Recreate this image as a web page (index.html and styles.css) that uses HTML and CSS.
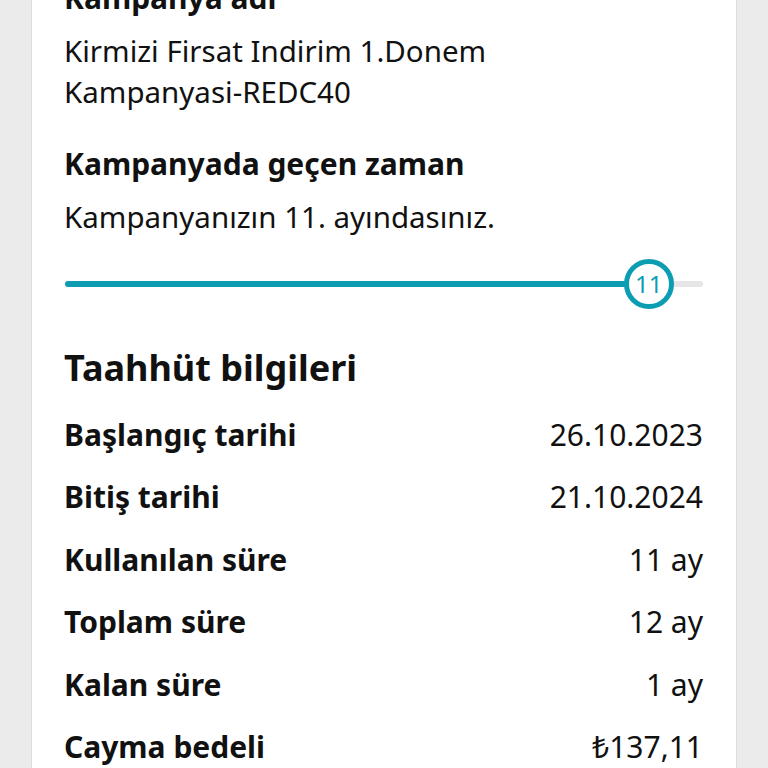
FILE: index.html
```html
<!DOCTYPE html>
<html lang="tr">
<head>
  <meta charset="UTF-8" />
  <meta name="viewport" content="width=device-width, initial-scale=1.0"/>
  <title>Kampanya detayı</title>
  <link rel="stylesheet" href="styles.css">
</head>
<body>
  <div class="card">
    <h3 class="label">Kampanya adı</h3>
    <p class="text">Kirmizi Firsat Indirim 1.Donem<br>Kampanyasi-REDC40</p>

    <h3 class="label spaced">Kampanyada geçen zaman</h3>
    <p class="text">Kampanyanızın 11. ayındasınız.</p>

    <div class="slider">
      <div class="track">
        <div class="fill" style="width: 91.5%"></div>
        <div class="knob" style="left: 91.5%">11</div>
      </div>
    </div>

    <h2 class="title">Taahhüt bilgileri</h2>
    <div class="row"><span class="key">Başlangıç tarihi</span><span class="val">26.10.2023</span></div>
    <div class="row"><span class="key">Bitiş tarihi</span><span class="val">21.10.2024</span></div>
    <div class="row"><span class="key">Kullanılan süre</span><span class="val">11 ay</span></div>
    <div class="row"><span class="key">Toplam süre</span><span class="val">12 ay</span></div>
    <div class="row"><span class="key">Kalan süre</span><span class="val">1 ay</span></div>
    <div class="row"><span class="key">Cayma bedeli</span><span class="val">₺137,11</span></div>
  </div>
</body>
</html>
```

FILE: styles.css
```css
body {
  margin: 0;
  background: #ebebeb;
  font-family: "Noto Sans", "Open Sans", sans-serif;
  color: #111;
}
.card {
  margin: -22px 31px 0 31px;
  padding: 0 33px 40px 32px;
  background: #fff;
  border-left: 1px solid #dcdcdc;
  border-right: 1px solid #dcdcdc;
}
.label {
  margin: 0;
  font-size: 30px;
  font-weight: 700;
  line-height: 40px;
}
.label.spaced {
  margin-top: 32px;
}
.text {
  margin: 12px 0 0 0;
  font-size: 29.5px;
  font-weight: 400;
  line-height: 41px;
}
.slider {
  padding-top: 44px;
}
.track {
  position: relative;
  height: 6px;
  margin-left: 1px;
  border-radius: 3px;
  background: #e6e6e6;
}
.fill {
  height: 6px;
  border-radius: 3px;
  background: #0c9db3;
}
.knob {
  position: absolute;
  top: -22px;
  width: 40px;
  height: 40px;
  margin-left: -25px;
  border: 5px solid #0c9db3;
  border-radius: 50%;
  background: #fff;
  color: #0c9db3;
  font-size: 24px;
  line-height: 40px;
  text-align: center;
}
.title {
  margin: 59px 0 13px 0;
  font-size: 36px;
  font-weight: 700;
  line-height: 44px;
}
.row {
  display: flex;
  justify-content: space-between;
  align-items: center;
  height: 62.5px;
  font-size: 30px;
}
.key {
  font-weight: 700;
}
.val {
  font-weight: 400;
}
```
